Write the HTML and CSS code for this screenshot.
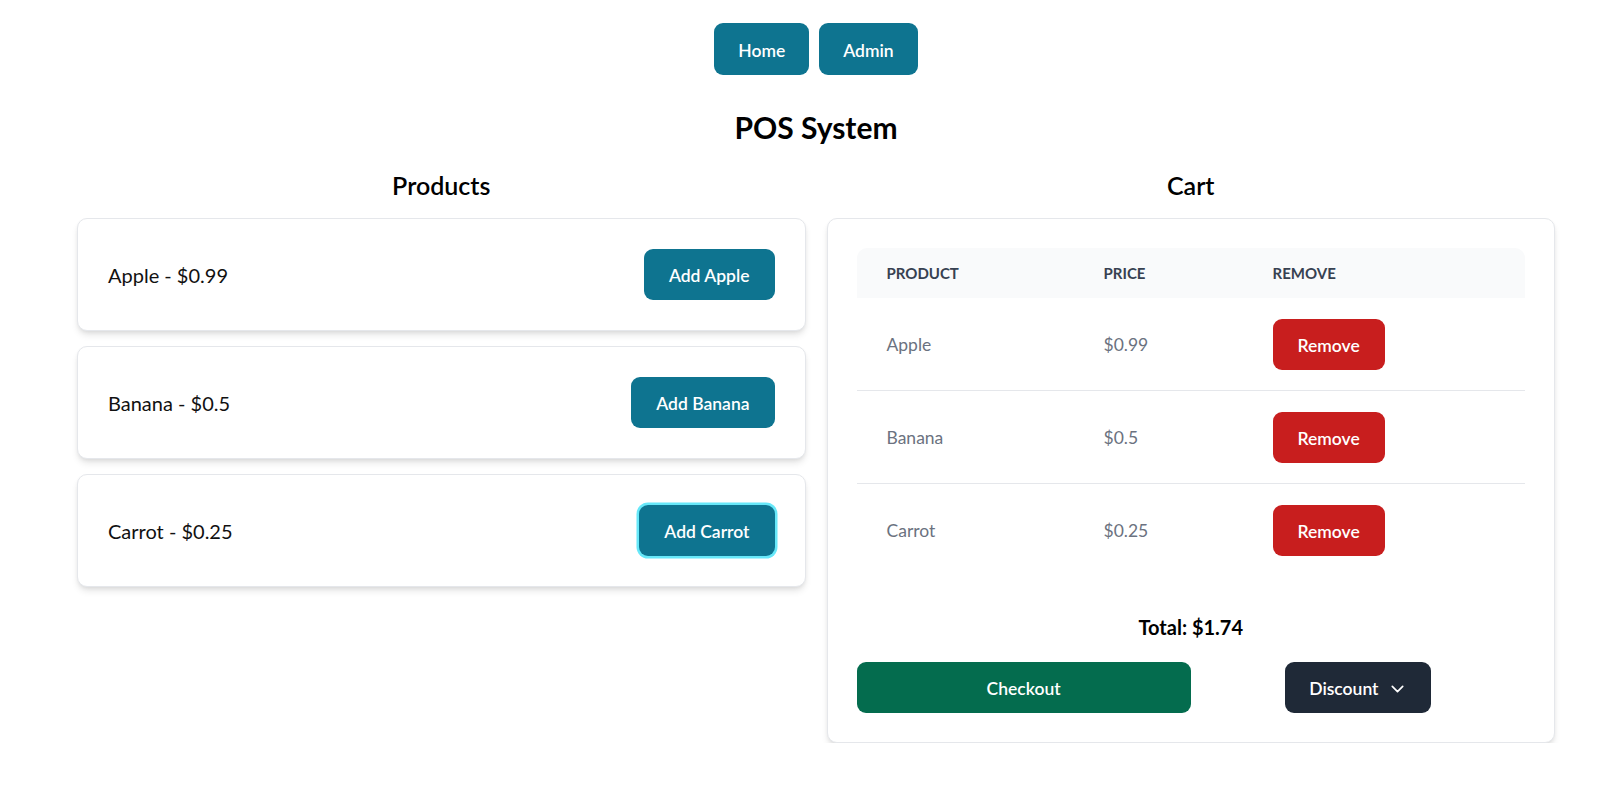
FILE: index.html
```html
<!DOCTYPE html>
<html lang="en">
<head>
<meta charset="utf-8">
<title>POS System</title>
<link rel="stylesheet" href="styles.css">
</head>
<body>
<div class="page">
  <nav class="nav">
    <button class="btn btn-teal">Home</button>
    <button class="btn btn-teal">Admin</button>
  </nav>
  <h1 class="title">POS System</h1>
  <div class="columns">
    <section class="col">
      <h2 class="col-title">Products</h2>
      <div class="product-list">
        <div class="card product">
          <span class="product-name">Apple - $0.99</span>
          <button class="btn btn-teal">Add Apple</button>
        </div>
        <div class="card product">
          <span class="product-name">Banana - $0.5</span>
          <button class="btn btn-teal">Add Banana</button>
        </div>
        <div class="card product">
          <span class="product-name">Carrot - $0.25</span>
          <button class="btn btn-teal focused">Add Carrot</button>
        </div>
      </div>
    </section>
    <section class="col">
      <h2 class="col-title">Cart</h2>
      <div class="card cart">
        <table class="cart-table">
          <thead>
            <tr>
              <th class="c1">Product</th>
              <th class="c2">Price</th>
              <th class="c3">Remove</th>
            </tr>
          </thead>
          <tbody>
            <tr>
              <td>Apple</td>
              <td>$0.99</td>
              <td><button class="btn btn-red">Remove</button></td>
            </tr>
            <tr>
              <td>Banana</td>
              <td>$0.5</td>
              <td><button class="btn btn-red">Remove</button></td>
            </tr>
            <tr class="last">
              <td>Carrot</td>
              <td>$0.25</td>
              <td><button class="btn btn-red">Remove</button></td>
            </tr>
          </tbody>
        </table>
        <div class="total">Total: $1.74</div>
        <div class="actions">
          <button class="btn btn-green">Checkout</button>
          <div class="action-cell">
            <button class="btn btn-dark">Discount
              <svg class="chev" width="13" height="8" viewBox="0 0 10 6" fill="none" aria-hidden="true"><path d="M1 1l4 4 4-4" stroke="#fff" stroke-width="1.3" stroke-linecap="round" stroke-linejoin="round"/></svg>
            </button>
          </div>
        </div>
      </div>
    </section>
  </div>
</div>
</body>
</html>
```

FILE: styles.css
```css
* { box-sizing: border-box; }

body {
  margin: 0;
  background: #ffffff;
  font-family: Lato, "Open Sans", Arial, sans-serif;
  color: #111111;
}

.page {
  margin-left: 77px;
  width: 1478px;
  padding-top: 23px;
}

.nav {
  display: flex;
  justify-content: center;
  gap: 10px;
}

.btn {
  font-family: inherit;
  border: 0;
  border-radius: 9px;
  color: #ffffff;
  font-size: 17.5px;
  font-weight: 600;
  line-height: 25px;
  padding: 14px 25px 12px;
  cursor: pointer;
}

.nav .btn { padding: 14.5px 24px 12.5px; }

.btn-teal { background: #0e7490; }
.btn-red { background: #c81e1e; }
.btn-green { background: #046c4e; width: 100%; }
.btn-dark {
  background: #1f2937;
  display: inline-flex;
  align-items: center;
  gap: 12px;
  padding: 14px 27px 12px 24px;
}

.focused { box-shadow: 0 0 0 2.5px #67e8f9; }

.title {
  margin: 34px 0 23px;
  text-align: center;
  font-size: 30px;
  line-height: 36px;
  font-weight: 700;
  color: #000;
}

.columns {
  display: grid;
  grid-template-columns: 1fr 1fr;
  gap: 21px;
  align-items: start;
}

.col-title {
  margin: 0 0 15px;
  text-align: center;
  font-size: 25px;
  line-height: 35px;
  font-weight: 600;
  color: #000;
}

.card {
  background: #fff;
  border: 1px solid #e5e7eb;
  border-radius: 10px;
  box-shadow: 0 5px 7px -1px rgba(0,0,0,0.1), 0 2px 5px -2px rgba(0,0,0,0.1);
  padding: 29px;
}

.product-list {
  display: flex;
  flex-direction: column;
  gap: 15px;
}

.product {
  display: flex;
  justify-content: space-between;
  align-items: center;
  padding: 30px;
}

.product .btn { height: 51px; }

.product-name {
  font-size: 20px;
  line-height: 28px;
}

.cart-table {
  width: 100%;
  border-collapse: collapse;
  text-align: left;
}

.cart-table th {
  background: #f9fafb;
  color: #374151;
  font-size: 15px;
  font-weight: 700;
  text-transform: uppercase;
  line-height: 20px;
  padding: 15px 30px;
}

.cart-table th.c1 { width: 217px; border-top-left-radius: 10px; }
.cart-table th.c2 { width: 169px; }
.cart-table th.c3 { border-top-right-radius: 10px; }

.cart-table td {
  color: #6b7280;
  font-size: 17.5px;
  line-height: 25px;
  padding: 20.5px 30px;
  border-bottom: 1px solid #e5e7eb;
  vertical-align: middle;
}

.cart-table tr.last td { border-bottom-color: #ffffff; }

.cart-table td .btn { height: 51px; }

.total {
  margin: 36px 0 21px;
  text-align: center;
  font-size: 20px;
  line-height: 28px;
  font-weight: 700;
  color: #000;
}

.actions {
  display: grid;
  grid-template-columns: 1fr 1fr;
}

.action-cell {
  display: flex;
  justify-content: center;
}

.chev { display: block; }
```
